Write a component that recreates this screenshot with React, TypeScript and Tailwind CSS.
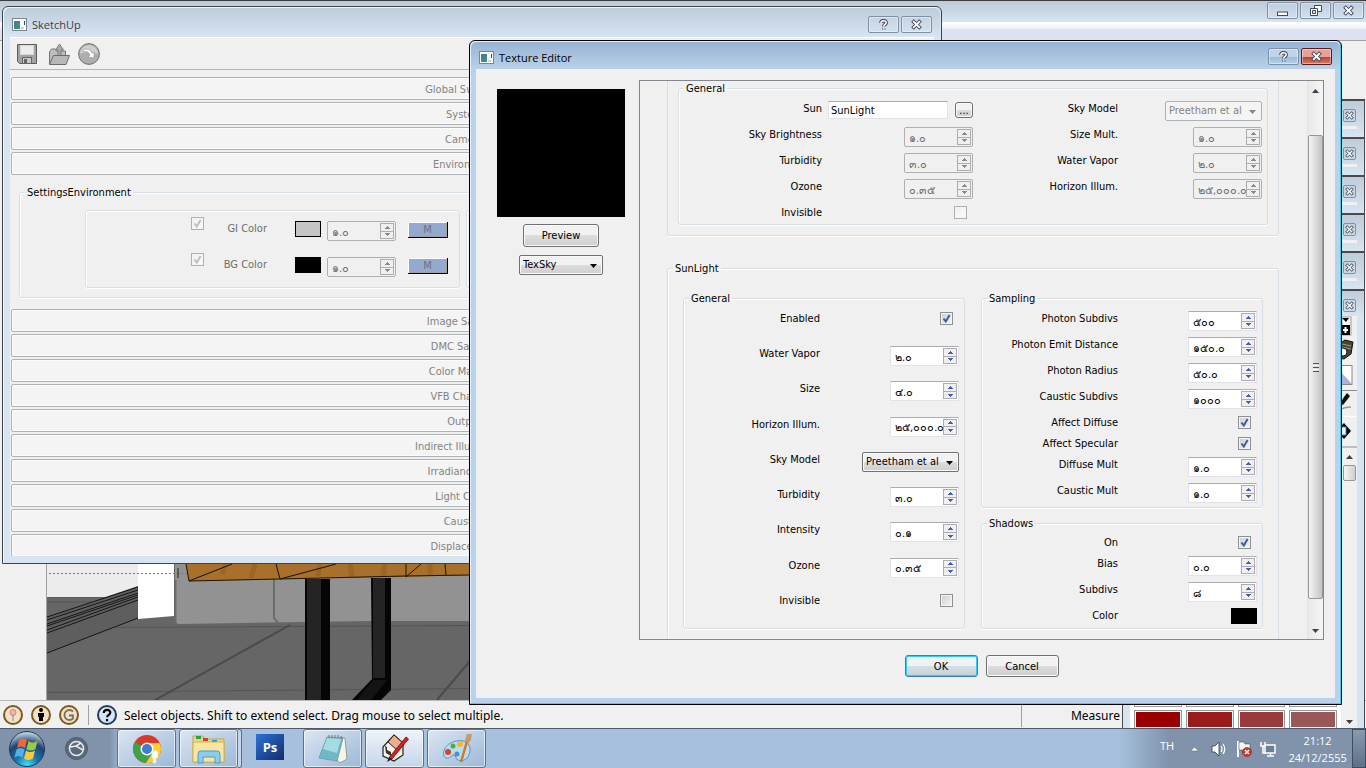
import { useId } from "react";
import type { ReactNode } from "react";

/* ---------- small controls ---------- */

const Spin = ({ id, value, disabled }: { id: string; value: string; disabled?: boolean }) => (
  <div
    className={`flex h-5 w-[69px] shrink-0 items-center border p-px ${
      disabled
        ? "rounded-xs border-[#afafaf] bg-[#f0f0f0]"
        : "border-[#e2e3ea] border-t-[#abadb3] bg-white"
    }`}
  >
    <input
      id={id}
      type="text"
      defaultValue={value}
      disabled={disabled}
      className={`w-0 min-w-0 flex-1 bg-transparent pt-[3px] pl-[3px] text-[11px] leading-3 ${
        disabled ? "text-[#6d6d6d]" : "text-black"
      }`}
    />
    <div className="flex h-4 w-[14px] flex-col border border-[#abadb3] bg-[#f0f0f0]">
      <button type="button" aria-label="Increase" disabled={disabled} className="flex flex-1 items-center justify-center border-b border-[#abadb3]">
        <svg width="5" height="3" viewBox="0 0 5 3" shapeRendering="crispEdges">
          <path d="M2 0h1v1h1v1h1v1H0V2h1V1h1z" fill={disabled ? "#8a8a8a" : "#4a5fa8"} />
        </svg>
      </button>
      <button type="button" aria-label="Decrease" disabled={disabled} className="flex flex-1 items-center justify-center">
        <svg width="5" height="3" viewBox="0 0 5 3" shapeRendering="crispEdges">
          <path d="M0 0h5v1H4v1H3v1H2V2H1V1H0z" fill={disabled ? "#8a8a8a" : "#4a5fa8"} />
        </svg>
      </button>
    </div>
  </div>
);

const Check = ({ id, checked, disabled }: { id: string; checked?: boolean; disabled?: boolean }) => (
  <span className="relative flex size-[13px] shrink-0">
    <input
      id={id}
      type="checkbox"
      defaultChecked={checked}
      disabled={disabled}
      className={`peer size-[13px] appearance-none border bg-linear-to-br shadow-[inset_0_0_0_1px_#f4f4f4] ${
        disabled ? "border-[#b1b1b1] from-[#f0f0f0] to-[#fbfbfb]" : "border-[#8e8f8f] from-[#c9cdd3] to-[#f6f6f6]"
      }`}
    />
    <svg
      viewBox="0 0 13 13"
      className={`pointer-events-none absolute inset-0 hidden size-[13px] peer-checked:block ${
        disabled ? "text-[#bfbfbf]" : "text-[#43599a]"
      }`}
    >
      <path d="M3.5 6.5l2.3 3L9.6 3" fill="none" stroke="currentColor" strokeWidth="2" />
    </svg>
  </span>
);

const Combo = ({
  id,
  label,
  value,
  disabled,
  className,
}: {
  id: string;
  label?: string;
  value: string;
  disabled?: boolean;
  className: string;
}) => (
  <span className={`relative flex h-5 shrink-0 ${className}`}>
    <select
      id={id}
      aria-label={label}
      disabled={disabled}
      className={`size-full appearance-none rounded-xs border pl-[3px] text-[11px] leading-4 ${
        disabled
          ? "border-[#adb2b5] bg-[#f4f4f4] text-[#838383] opacity-100"
          : "border-[#707070] bg-linear-to-b from-[#f2f2f2] from-50% via-[#dddddd] via-50% to-[#cfcfcf] text-black shadow-[inset_0_0_0_1px_#fafafa]"
      }`}
    >
      <option>{value}</option>
    </select>
    <svg width="7" height="4" viewBox="0 0 7 4" className="pointer-events-none absolute top-[9px] right-[6px]">
      <path d="M0 0h7L3.500 4z" fill={disabled ? "#838383" : "#000"} />
    </svg>
  </span>
);

const PushButton = ({ children, primary, className }: { children: ReactNode; primary?: boolean; className: string }) => (
  <button
    type="button"
    className={`flex items-center justify-center rounded-[3px] border pt-px text-[11px] leading-4 ${
      primary
        ? "border-[#3c7fb1] bg-linear-to-b from-[#eef3f5] from-50% via-[#d3dfe4] via-50% to-[#c4d3da] shadow-[inset_0_0_0_1px_#34c9f7]"
        : "border-[#707070] bg-linear-to-b from-[#f2f2f2] from-50% via-[#dddddd] via-50% to-[#cfcfcf] shadow-[inset_0_0_0_1px_#fafafa]"
    } ${className}`}
  >
    {children}
  </button>
);

/* ---------- form rows ---------- */

type Field = {
  label: string;
  kind: "spin" | "check" | "combo" | "color" | "sun";
  value?: string;
  checked?: boolean;
  disabled?: boolean;
};

const Row = ({ field, labelWidth, className }: { field: Field; labelWidth: string; className: string }) => {
  const id = useId();
  const { kind, label, value = "", checked, disabled } = field;
  return (
    <div className={`flex items-start ${className}`}>
      <label htmlFor={id} className={`shrink-0 pt-px text-right leading-[14px] ${labelWidth}`}>
        {label}
      </label>
      <div className={`flex flex-1 justify-end ${kind === "check" ? "pt-px pr-[6px]" : ""}`}>
        {kind === "spin" && <Spin id={id} value={value} disabled={disabled} />}
        {kind === "check" && <Check id={id} checked={checked} disabled={disabled} />}
        {kind === "combo" && <Combo id={id} value={value} disabled={disabled} className="w-[97px]" />}
        {kind === "color" && <input id={id} type="button" aria-label="Color" className="h-4 w-[26px] bg-black" />}
        {kind === "sun" && (
          <div className="flex flex-1 items-center gap-[7px] pl-[6px]">
            <input
              id={id}
              type="text"
              defaultValue={value}
              className="h-[18px] w-0 flex-1 border border-[#e2e3ea] border-t-[#abadb3] bg-white pl-[2px] text-[11px]"
            />
            <PushButton className="h-4 w-[18px]">...</PushButton>
          </div>
        )}
      </div>
    </div>
  );
};

const Group = ({ title, className, children }: { title?: string; className: string; children: ReactNode }) => (
  <fieldset className={`min-w-0 rounded-[3px] border border-[#d5dfe5] shadow-[inset_1px_1px_0_#fff,0_1px_0_#fff] ${className}`}>
    {title && <legend className="ml-[5px] px-[2px] pt-[2px] leading-[14px] text-black">{title}</legend>}
    {children}
  </fieldset>
);

const skyLeft: Field[] = [
  { label: "Sun", kind: "sun", value: "SunLight" },
  { label: "Sky Brightness", kind: "spin", value: "๑.๐", disabled: true },
  { label: "Turbidity", kind: "spin", value: "๓.๐", disabled: true },
  { label: "Ozone", kind: "spin", value: "๐.๓๕", disabled: true },
  { label: "Invisible", kind: "check", disabled: true },
];

const skyRight: Field[] = [
  { label: "Sky Model", kind: "combo", value: "Preetham et al", disabled: true },
  { label: "Size Mult.", kind: "spin", value: "๑.๐", disabled: true },
  { label: "Water Vapor", kind: "spin", value: "๒.๐", disabled: true },
  { label: "Horizon Illum.", kind: "spin", value: "๒๕,๐๐๐.๐", disabled: true },
];

const sunGeneral: Field[] = [
  { label: "Enabled", kind: "check", checked: true },
  { label: "Water Vapor", kind: "spin", value: "๒.๐" },
  { label: "Size", kind: "spin", value: "๔.๐" },
  { label: "Horizon Illum.", kind: "spin", value: "๒๕,๐๐๐.๐" },
  { label: "Sky Model", kind: "combo", value: "Preetham et al" },
  { label: "Turbidity", kind: "spin", value: "๓.๐" },
  { label: "Intensity", kind: "spin", value: "๐.๑" },
  { label: "Ozone", kind: "spin", value: "๐.๓๕" },
  { label: "Invisible", kind: "check" },
];

const sampling: Field[] = [
  { label: "Photon Subdivs", kind: "spin", value: "๕๐๐" },
  { label: "Photon Emit Distance", kind: "spin", value: "๑๕๐.๐" },
  { label: "Photon Radius", kind: "spin", value: "๕๐.๐" },
  { label: "Caustic Subdivs", kind: "spin", value: "๑๐๐๐" },
  { label: "Affect Diffuse", kind: "check", checked: true },
  { label: "Affect Specular", kind: "check", checked: true },
  { label: "Diffuse Mult", kind: "spin", value: "๑.๐" },
  { label: "Caustic Mult", kind: "spin", value: "๑.๐" },
];

const shadows: Field[] = [
  { label: "On", kind: "check", checked: true },
  { label: "Bias", kind: "spin", value: "๐.๐" },
  { label: "Subdivs", kind: "spin", value: "๘" },
  { label: "Color", kind: "color" },
];

const rowHeight = (f: Field) => (f.kind === "check" ? "h-[21px]" : "h-[26px]");

/* ---------- window chrome ---------- */

const AppIcon = () => (
  <svg width="15" height="13" viewBox="0 0 15 13" className="shrink-0">
    <rect x=".5" y=".5" width="14" height="12" fill="#fff" stroke="#7f858c" />
    <rect x="2" y="3" width="6" height="8" fill="#3f8f7d" />
    <path d="M2 3h6L2 9z" fill="#4a78a8" />
    <rect x="9" y="9" width="3" height="2" fill="#cdd2d6" />
    <rect x="12" y="3" width="1" height="4" fill="#2b4a8a" />
  </svg>
);

const Cross = ({ size = 11 }: { size?: number }) => (
  <svg width={size} height={size} viewBox="0 0 12 11">
    <path d="M3 2.500l6 6M9 2.500l-6 6" stroke="#434a5c" strokeWidth="4" strokeLinecap="square" />
    <path d="M3 2.500l6 6M9 2.500l-6 6" stroke="#fff" strokeWidth="2" strokeLinecap="square" />
  </svg>
);

const CaptionButton = ({ label, red, className, children }: { label: string; red?: boolean; className?: string; children: ReactNode }) => (
  <button
    type="button"
    aria-label={label}
    className={`flex h-[17px] w-[31px] items-center justify-center rounded-xs border shadow-[inset_0_0_0_1px_rgba(255,255,255,0.4)] ${
      red
        ? "border-[#5a1a1d] bg-linear-to-b from-[#e5a398] from-50% via-[#bb3d24] via-50% to-[#d27b66]"
        : "border-[#7f90a9]"
    } ${className ?? ""}`}
  >
    {children}
  </button>
);

const Question = () => (
  <svg width="11" height="12" viewBox="0 0 11 12" fill="none">
    <path d="M3 4c0-3 5.200-3 5.200-.3C8.200 5.500 5.700 5.500 5.700 7.500M5.700 9.500v1" stroke="#434a5c" strokeWidth="3.600" />
    <path d="M3 4c0-3 5.200-3 5.200-.3C8.200 5.500 5.700 5.500 5.700 7.500M5.700 9.500v1" stroke="#fff" strokeWidth="1.600" />
  </svg>
);

const SmallArrow = ({ down }: { down?: boolean }) => (
  <svg width="7" height="4" viewBox="0 0 7 4">
    <path d={down ? "M0 0h7L3.500 4z" : "M0 4h7L3.500 0z"} fill="#404040" />
  </svg>
);

/* ---------- Texture Editor ---------- */

const TextureEditor = () => (
  <section className="absolute top-10 left-[469px] flex h-[665px] w-[873px] flex-col rounded-t-md border border-black bg-[#b9d1ea] px-[6px] pb-[6px] shadow-[inset_-1px_-1px_0_#3fd0ee,inset_1px_1px_0_#e6f0fa]">
    <header className="-mx-[5px] mt-px flex h-[27px] shrink-0 items-center gap-[5px] rounded-t-md bg-linear-to-b from-[#98b4d2] to-[#b9d1ea] px-2 pb-[2px] pt-[6px]">
      <AppIcon />
      <h1 className="flex-1 font-['Open_Sans',sans-serif] text-[11px] leading-4 text-black">Texture Editor</h1>
      <div className="flex gap-[2px] pb-[2px]">
        <CaptionButton label="Help" className="border-[#5c7291] bg-linear-to-b from-[#c0d3e8] from-50% via-[#9db8d5] via-50% to-[#b9d1ea]">
          <Question />
        </CaptionButton>
        <CaptionButton label="Close" red>
          <Cross />
        </CaptionButton>
      </div>
    </header>

    <div className="flex min-h-0 flex-1 flex-col bg-[#f0f0f0] px-[11px] pt-[11px]">
      <div className="flex h-[560px] gap-[14px] pl-[10px]">
        <div className="flex w-32 shrink-0 flex-col items-center pt-[9px]">
          <div className="size-32 bg-black" />
          <PushButton className="mt-[7px] h-[23px] w-[76px]">Preview</PushButton>
          <Combo id="texture-type" label="Texture type" value="TexSky" className="mt-2 w-[84px]" />
        </div>

        <div className="flex min-w-0 flex-1 overflow-hidden border border-[#828790]">
          <div className="min-w-0 flex-1 pr-7 pl-[27px]">
            <fieldset className="rounded-b-[3px] border border-t-0 border-[#d5dfe5] px-[10px] pb-[10px] shadow-[0_1px_0_#fff]">
              <Group title="General" className="-mt-px h-[145px]">
                <div className="flex h-[124px] items-start gap-2 pt-[5px] pr-[5px] pl-px">
                  <div className="w-[293px]">
                    {skyLeft.map((f) => (
                      <Row key={f.label} field={f} labelWidth="w-[142px]" className="h-[26px]" />
                    ))}
                  </div>
                  <div className="flex-1">
                    {skyRight.map((f) => (
                      <Row key={f.label} field={f} labelWidth="w-[137px]" className="h-[26px]" />
                    ))}
                  </div>
                </div>
              </Group>
            </fieldset>

            <Group title="SunLight" className="mt-6 h-[400px]">
              <div className="flex gap-4 px-[15px] pt-[14px]">
                <Group title="General" className="w-[282px]">
                  <div className="flex h-[322px] flex-col pt-[5px] pr-[5px] pl-[6px]">
                    {sunGeneral.map((f) => (
                      <Row key={f.label} field={f} labelWidth="w-[130px]" className="min-h-0 flex-1" />
                    ))}
                  </div>
                </Group>
                <div className="flex min-w-0 flex-1 flex-col gap-[7px]">
                  <Group title="Sampling" className="">
                    <div className="h-[201px] px-[5px] pt-[5px]">
                      {sampling.map((f) => (
                        <Row key={f.label} field={f} labelWidth="w-[131px]" className={rowHeight(f)} />
                      ))}
                    </div>
                  </Group>
                  <Group title="Shadows" className="">
                    <div className="h-[97px] px-[5px] pt-1">
                      {shadows.map((f) => (
                        <Row key={f.label} field={f} labelWidth="w-[131px]" className={rowHeight(f)} />
                      ))}
                    </div>
                  </Group>
                </div>
              </div>
            </Group>
          </div>

          <div className="flex w-4 shrink-0 flex-col items-center border-l border-[#e3e3e3] bg-linear-to-r from-[#e9e9e9] to-[#f5f5f5]">
            <div className="flex h-[54px] items-start pt-2">
              <SmallArrow />
            </div>
            <div className="flex w-[15px] flex-1 flex-col items-center justify-center gap-px rounded-xs border border-[#979797] bg-linear-to-r from-[#f5f5f5] to-[#c4c4c8]">
              <i className="h-px w-[6px] bg-[#555]" />
              <i className="h-px w-[6px] bg-white" />
              <i className="h-px w-[6px] bg-[#555]" />
              <i className="h-px w-[6px] bg-white" />
              <i className="h-px w-[6px] bg-[#555]" />
            </div>
            <div className="flex h-10 items-end pb-[6px]">
              <SmallArrow down />
            </div>
          </div>
        </div>
      </div>

      <div className="flex justify-center gap-2 pt-[15px] pl-[169px] pr-[17px]">
        <PushButton primary className="h-[22px] w-[73px]">
          OK
        </PushButton>
        <PushButton className="h-[22px] w-[73px]">Cancel</PushButton>
      </div>
    </div>
  </section>
);

/* ---------- SketchUp options window ---------- */

const Rollout = ({ children }: { children: string }) => (
  <button
    type="button"
    className="flex h-[23px] w-full shrink-0 items-center justify-center rounded-xs border border-[#adb2b5] bg-[#f4f4f4] pt-[2px] leading-4 text-[#838383] shadow-[inset_0_0_0_1px_#fcfcfc]"
  >
    {children}
  </button>
);

const EnvRow = ({ label, color }: { label: string; color: string }) => {
  const id = useId();
  return (
    <div className="flex h-9 items-start">
      <div className="-mt-1">
        <Check id={id} checked disabled />
      </div>
      <label htmlFor={id} className="w-[63px] pt-px text-right leading-[14px] text-[#6d6d6d]">
        {label}
      </label>
      <button type="button" aria-label={`${label} swatch`} className={`ml-7 h-4 w-[26px] border border-black ${color}`} />
      <span className="ml-[6px]">
        <Spin id={`${id}-value`} value="๑.๐" disabled />
      </span>
      <button
        type="button"
        className="mt-px ml-3 flex h-4 w-10 items-center justify-center border-r border-b border-black bg-[#93a9cf] pt-[2px] text-[11px] text-[#6d7080] shadow-[inset_1px_1px_0_#fff,inset_-1px_-1px_0_#a0a0a0]"
      >
        M
      </button>
    </div>
  );
};

const topRollouts = ["Global Switches", "System", "Camera", "Environment"];
const bottomRollouts = [
  "Image Sampler",
  "DMC Sampler",
  "Color Mapping",
  "VFB Channels",
  "Output",
  "Indirect Illumination",
  "Irradiance Map",
  "Light Cache",
  "Caustics",
  "Displacement",
];

const OptionsWindow = () => (
  <section className="absolute top-[6px] left-[2px] flex h-[558px] w-[940px] flex-col rounded-t-md border border-[#3e4347] bg-[#d7e4f2] px-[7px] pb-[7px] shadow-[inset_1px_1px_0_#f0f5fa]">
    <header className="-mx-[6px] mt-px flex h-[29px] shrink-0 items-center gap-[5px] rounded-t-md bg-linear-to-b from-[#bfcddb] to-[#d7e4f2] px-2 pt-1">
      <AppIcon />
      <h2 className="flex-1 font-['Open_Sans',sans-serif] text-[11px] leading-4 text-[#3c4146]">SketchUp</h2>
      <div className="flex gap-[2px]">
        <CaptionButton label="Help">
          <Question />
        </CaptionButton>
        <CaptionButton label="Close">
          <Cross />
        </CaptionButton>
      </div>
    </header>

    <div className="flex min-h-0 flex-1 flex-col border-t border-white bg-[#f0f0f0]">
      <div className="flex h-8 shrink-0 items-center gap-3 border-b border-[#b5b5b5] px-[7px]">
        <button type="button" aria-label="Save">
          <svg width="20" height="20" viewBox="0 0 20 20">
            <path d="M.5.500h19v19h-17l-2-2z" fill="#a3a3a3" stroke="#5b5b5b" />
            <rect x="3.500" y="1.500" width="13" height="9" fill="#ececec" stroke="#d8d8d8" />
            <rect x="5.500" y="13.500" width="9" height="6" fill="#c8c8c8" stroke="#666" />
            <rect x="7" y="15" width="3" height="4" fill="#666" />
          </svg>
        </button>
        <button type="button" aria-label="Load">
          <svg width="21" height="22" viewBox="0 0 21 22">
            <path d="M.5 21V9l2-3h4l1 2h9v5" fill="#bdbdbd" stroke="#777" />
            <path d="M10.500 1l4 6h-2.500v6H9V7H6.500z" fill="#a9a9a9" stroke="#7d7d7d" />
            <path d="M.5 21.500l4-9h16l-3.500 9z" fill="#b8b8b8" stroke="#6b6b6b" />
          </svg>
        </button>
        <button type="button" aria-label="Restore defaults" className="-ml-1">
          <svg width="22" height="22" viewBox="0 0 22 22">
            <circle cx="11" cy="11" r="10.400" fill="#aeaeae" stroke="#717171" />
            <path d="M2 11a9 9 0 0 1 18 0q-9-4-18 0z" fill="#cfcfcf" />
            <path d="M5 7c4-2 7-1 9 3l2-1v6l-6-1 2-2C10 8 8 8 5 9z" fill="#fff" stroke="#929292" strokeWidth=".6" />
          </svg>
        </button>
      </div>

      <div className="flex min-h-0 flex-1 flex-col gap-[2px] overflow-hidden pt-[7px] pr-4 pl-px">
        {topRollouts.map((name) => (
          <Rollout key={name}>{name}</Rollout>
        ))}
        <Group title="SettingsEnvironment" className="mt-[7px] mb-[9px] ml-2 h-[114px] shrink-0">
          <div className="flex gap-[6px] px-[65px] pt-[10px]">
            <Group className="h-[78px] w-[375px] shrink-0 pt-[10px] pl-[105px]">
              <EnvRow label="GI Color" color="bg-[#c5c5c5]" />
              <EnvRow label="BG Color" color="bg-black" />
            </Group>
            <Group className="h-[78px] flex-1">{null}</Group>
          </div>
        </Group>
        {bottomRollouts.map((name) => (
          <Rollout key={name}>{name}</Rollout>
        ))}
      </div>
    </div>
  </section>
);

/* ---------- modelling viewport ---------- */

const Viewport = () => (
  <svg width="423" height="136" viewBox="47 564 423 136" className="shrink-0">
    <rect x="47" y="564" width="423" height="136" fill="#666" />
    <path d="M47 564h91v23l-30 10H47z" fill="#ececec" />
    <path d="M175 564h295v57l-100 0-192 3-3-3z" fill="#929292" />
    <path d="M138 564h36v52l-36 3z" fill="#fff" />
    <path d="M47 597.500h61" stroke="#4a48e8" />
    <path d="M47 602h48" stroke="#555" />
    <path d="M47 617l91-31v32l-91 35z" fill="#5e5e5e" />
    <path d="M47 617l91-30M47 620l91-30M47 624l91-31M47 626l91-31M47 630l91-33M47 633l91-33M47 653l91-35" stroke="#161616" fill="none" />
    <path d="M274 578v40l5 6M175.500 580v42" stroke="#6c6c6c" strokeWidth="2" fill="none" />
    <path d="M49 573.500h138" stroke="#777" strokeDasharray="2 2" />
    <path d="M178 568v10" stroke="#222" />
    <path d="M186 564h284v11l-65 2-125 2-91 2z" fill="#a8702b" />
    <path d="M225 564l-2 10M255 564l-4 14M320 564l-2 12M350 564l2 13M385 564l-2 12M430 564v11" stroke="#93601f" strokeWidth="5" opacity=".6" />
    <path d="M186 564l3 17 91-2 125-3 65-1M189 581l43-17M276 564l4 15M280 579l56-15M406 564v13l15-13M445 564l1 11" stroke="#1c1204" fill="none" />
    <path d="M115 627.500l355-2M47 692.500l423-4" stroke="#555" />
    <path d="M290 625L155 700M470 661l-33 39" stroke="#4a4a4a" strokeWidth="2" />
    <path d="M305 579h25v121h-25z" fill="#050505" />
    <path d="M307 579h14v121h-14z" fill="#242424" />
    <path d="M371 578h20v112l-10 10h-29l20-21z" fill="#050505" />
    <path d="M373 578h12v100h-12z" fill="#242424" />
    <path d="M373 680h14l-16 20h-14z" fill="#141414" />
  </svg>
);

/* ---------- tray on the right edge ---------- */

const trays = ["Tray 1", "Tray 2", "Tray 3", "Tray 4", "Tray 5"];

const TrayClose = ({ name }: { name: string }) => (
  <div className="flex justify-end pt-2 pr-2">
    <button type="button" aria-label={`Close ${name}`} className="flex size-[13px] items-center justify-center rounded-xs border border-[#7f90a9]">
      <Cross size={9} />
    </button>
  </div>
);

const SideTrays = () => (
  <aside className="absolute top-[99px] right-px bottom-10 flex w-[243px] flex-col">
    {trays.map((name) => (
      <div key={name} className="h-[38px] shrink-0 border-t-2 border-r border-[#4a4a4a] bg-linear-to-b from-[#bfcddb] to-[#d7e4f2]">
        <TrayClose name={name} />
        <div className="mt-1 mr-[7px] ml-[7px] h-[3px] bg-[#f0f0f0]" />
      </div>
    ))}
    <div className="flex min-h-0 flex-1 flex-col border-t-2 border-r border-l border-[#4a4a4a] bg-[#d7e4f2] px-[7px]">
      <div className="-mx-[7px] h-[25px] shrink-0 bg-linear-to-b from-[#bfcddb] to-[#d7e4f2]">
        <TrayClose name="Materials" />
      </div>
      <div className="flex min-h-0 flex-1 flex-col bg-[#f0f0f0]">
        <div className="flex h-[132px] shrink-0 flex-col items-end">
          <svg width="22" height="132" viewBox="-1 2 22 132">
            <rect x="6" y="3" width="9" height="18" fill="#fff" stroke="#999" />
            <path d="M6 4h7l-3 4z" fill="#000" />
            <rect x="6" y="11" width="8" height="10" fill="#000" />
            <path d="M7 16h5M9.500 13v6" stroke="#fff" strokeWidth="2" />
            <path d="M3 30l6-4 8 2-2 12-7 5-5-1z" fill="#4a4436" stroke="#111" />
            <path d="M6 30l9 2M6 33l9 2" stroke="#a39b80" />
            <circle cx="7" cy="38" r="4" fill="#fff" stroke="#111" />
            <rect x="3" y="51.500" width="13" height="19" fill="#fff" stroke="#888" />
            <path d="M3 56l13 14H3z" fill="#aeb2d6" />
            <path d="M-1 76.500h22M-1 133h22" stroke="#8c8c8c" />
            <path d="M11 79l3 3-3 4-4 5-3-2 4-6z" fill="#111" />
            <path d="M4 96q4-3 11-3" stroke="#999" strokeWidth="1.500" fill="none" />
            <path d="M-1 102.500h22" stroke="#fff" />
            <path d="M8 109l7 8-7 8-5-5v-6z" fill="#000" />
            <rect x="4" y="113" width="6" height="8" fill="#fff" stroke="#2a7fd4" />
          </svg>
        </div>
        <div className="flex min-h-0 flex-1">
          <div className="flex min-w-0 flex-1 flex-col justify-end overflow-hidden bg-white px-1">
            <div className="grid grid-cols-4 gap-x-1 gap-y-[3px]">
              {["bg-[#cc1f1f]", "bg-[#d04747]", "bg-[#d06b6b]", "bg-[#d08b8b]"].map((c) => (
                <button key={c} type="button" aria-label="Material" className={`h-4 border border-[#999] ring-1 ring-white ring-inset ${c}`} />
              ))}
              {["bg-[#990000]", "bg-[#991c1c]", "bg-[#993b3b]", "bg-[#995858]"].map((c) => (
                <button key={c} type="button" aria-label="Material" className={`h-[18px] border border-b-0 border-[#999] shadow-[inset_0_0_0_1px_#fff] ${c}`} />
              ))}
            </div>
          </div>
          <div className="flex w-4 shrink-0 flex-col items-center justify-between bg-[#f0f0f0] pt-[7px] pb-1">
            <div className="flex flex-col items-center gap-[6px]">
              <SmallArrow />
              <div className="h-4 w-[13px] rounded-xs border border-[#979797] bg-linear-to-r from-[#f5f5f5] to-[#cfcfcf]" />
            </div>
            <SmallArrow down />
          </div>
        </div>
      </div>
    </div>
  </aside>
);

/* ---------- status bar and taskbar ---------- */

const StatusBar = () => (
  <footer className="flex h-7 shrink-0 items-center border-t border-[#b8b8b8] bg-[#f0f0f0] pt-px font-['Noto_Sans',sans-serif] text-[12px] text-black">
    <div className="flex items-center gap-2 pl-[3px]">
      <svg width="20" height="20" viewBox="0 0 20 20">
        <circle cx="10" cy="10" r="9" fill="#f0e2c6" stroke="#80571f" strokeWidth="2" />
        <circle cx="10" cy="7.500" r="3" fill="#f3b3a6" stroke="#c88a7e" />
        <path d="M10 10v6" stroke="#888" />
      </svg>
      <svg width="20" height="20" viewBox="0 0 20 20">
        <circle cx="10" cy="10" r="9" fill="#f0e2c6" stroke="#80571f" strokeWidth="2" />
        <circle cx="10" cy="5" r="2" />
        <path d="M7 8h6v4h-1v4H8v-4H7z" />
      </svg>
      <svg width="20" height="20" viewBox="0 0 20 20">
        <circle cx="10" cy="10" r="9" fill="#f0e2c6" stroke="#80571f" strokeWidth="2" />
        <path d="M14 6.500a5 5 0 1 0 0 7v-3h-4" fill="none" stroke="#77705f" strokeWidth="1.800" />
      </svg>
    </div>
    <div className="mr-2 ml-[9px] h-5 w-px bg-[#a0a0a0]" />
    <svg width="20" height="20" viewBox="0 0 20 20">
      <circle cx="10" cy="10" r="9" fill="#d3e6f5" stroke="#1f3d5c" strokeWidth="2" />
      <path d="M6.800 8c0-4 6.500-4 6.500-.5 0 2.300-3.200 2.300-3.200 4.700M10 14v2.200" fill="none" stroke="#000" strokeWidth="2.200" />
    </svg>
    <p className="flex-1 pt-px pl-[7px]">Select objects. Shift to extend select. Drag mouse to select multiple.</p>
    <div className="mr-[244px] flex h-6 w-[101px] items-center justify-end border-l border-[#a0a0a0] pt-px pr-[2px]">Measure</div>
  </footer>
);

const TaskButton = ({ label, active, className, children }: { label: string; active?: boolean; className?: string; children: ReactNode }) => (
  <button
    type="button"
    aria-label={label}
    className={`flex h-[39px] w-[59px] items-center justify-center rounded-[3px] border border-[#5a708c] shadow-[inset_0_0_0_1px_rgba(255,255,255,0.6)] ${
      active ? "bg-linear-to-b from-[#eef3f9] to-[#c5d6ea]" : "bg-linear-to-br from-[#dbe6f2] to-[#9db8d8]"
    } ${className ?? ""}`}
  >
    {children}
  </button>
);

const Taskbar = () => (
  <nav className="flex h-10 shrink-0 items-center border-t border-[#4c5a6c] bg-linear-to-r from-[#8093ab] from-8% via-[#a6c0dd] via-9% to-[#a6c0dd]">
    <button type="button" aria-label="Start" className="ml-2">
      <svg width="38" height="38" viewBox="0 0 38 38">
        <defs>
          <radialGradient id="orb" cx=".5" cy=".95" r=".9">
            <stop offset="0" stopColor="#3ee0ff" />
            <stop offset=".35" stopColor="#1878ae" />
            <stop offset=".7" stopColor="#1d4470" />
            <stop offset="1" stopColor="#b7cad9" />
          </radialGradient>
        </defs>
        <circle cx="19" cy="19" r="17.500" fill="url(#orb)" stroke="#1f3a58" />
        <path d="M11 10q4-3 8 0l-2 8q-4-3-8 0z" fill="#f0673a" />
        <path d="M20.500 11q4 3 9 0l-2 8q-5 3-9 0z" fill="#9bcb45" />
        <path d="M8.500 19.500q4-3 8 0l-2 8q-4-3-8 0z" fill="#5aaee8" />
        <path d="M18 20.500q4 3 9 0l-2 8q-5 3-9 0z" fill="#fbc93b" />
      </svg>
    </button>
    <button type="button" aria-label="Launcher" className="ml-[19px]">
      <svg width="23" height="23" viewBox="0 0 23 23" fill="none">
        <circle cx="11.500" cy="11.500" r="11" fill="#5b697b" stroke="#4e5b6c" />
        <circle cx="11.500" cy="11.500" r="7" stroke="#e6ebf0" strokeWidth="1.500" />
        <path d="M5 10l6-1 7 4M11 9l5-3" stroke="#e6ebf0" strokeWidth="1.500" />
      </svg>
    </button>
    <div className="ml-[29px] flex items-center gap-[3px]">
      <TaskButton label="Chrome">
        <svg width="30" height="30" viewBox="0 0 30 30">
          <circle cx="15" cy="15" r="14" fill="#d8392b" />
          <path d="M15 15L2.900 8A14 14 0 0 0 14 29l7-11z" fill="#3fa14a" />
          <path d="M15 9h12.600A14 14 0 0 1 14 29l7-11z" fill="#f8d12f" />
          <circle cx="15" cy="15" r="6.500" fill="#fff" />
          <circle cx="15" cy="15" r="5" fill="#3f7cc9" />
          <path d="M20 18q4-3 6 0v6h-2v5h-3v-5h-1z" fill="#fff" stroke="#ddd" strokeWidth=".5" />
        </svg>
      </TaskButton>
      <div className="flex">
        <TaskButton label="Explorer" className="w-[55px]">
          <svg width="34" height="30" viewBox="0 0 34 30">
            <path d="M1 2h10l2 3h19v23H1z" fill="#eed57c" stroke="#c4a44a" />
            <path d="M4 2h5v3H4z" fill="#1fa64a" />
            <path d="M11 4h5v3h-5z" fill="#d4402f" />
            <path d="M20 6h5v3h-5z" fill="#2f8fd8" />
            <path d="M1 8h31v20H1z" fill="#f7e6a3" stroke="#cfb057" />
            <path d="M6 29v-9q0-3 3-3h16q3 0 3 3v9h-5v-6H11v6z" fill="#8ccdee" stroke="#4a9cc8" />
          </svg>
        </TaskButton>
        <div className="h-[39px] w-1 rounded-r-[3px] border border-l-0 border-[#5a708c] bg-[#c5d6ea]" />
      </div>
      <button type="button" aria-label="Photoshop" className="mr-[5px] flex w-[50px] justify-center pb-1">
        <svg width="28" height="26" viewBox="0 0 28 26">
          <defs>
            <linearGradient id="ps" x1="0" y1="0" x2="1" y2="1">
              <stop offset="0" stopColor="#2c72d6" />
              <stop offset="1" stopColor="#132d6c" />
            </linearGradient>
          </defs>
          <rect width="28" height="26" fill="url(#ps)" />
          <text x="14" y="18" textAnchor="middle" fill="#fff" className="font-['Open_Sans',sans-serif] text-[13px] font-bold">
            Ps
          </text>
        </svg>
      </button>
      <TaskButton label="Notepad">
        <svg width="32" height="30" viewBox="0 0 32 30">
          <path d="M24 3l4 1 2 21-7 4-3-3z" fill="#f4f4ee" stroke="#9a9a8a" />
          <path d="M10 3l16 1-6 23L2 24z" fill="#6fb9c6" stroke="#6fa3ad" />
          <path d="M10 4l14 1-4 14L6 15z" fill="#a5dbe2" />
          <path d="M12 1v3M15 1v3M18 1v3M21 1v3M24 2v3" stroke="#777" />
        </svg>
      </TaskButton>
      <TaskButton label="SketchUp" active>
        <svg width="30" height="32" viewBox="0 0 30 32">
          <path d="M3 14L14 2l9 8v12l-9 6-11-5z" fill="#f6f2e6" stroke="#222" strokeWidth="1.200" />
          <path d="M14 2l9 8-5 8-10-9z" fill="#eaaf8c" stroke="#222" />
          <path d="M5 13l2 1v3l4 2v4l-5-3z" fill="#333" />
          <path d="M26 4l2.500 2L12 26l-3 1 .5-3z" fill="#d32121" stroke="#6b0d0d" strokeWidth=".8" />
          <path d="M7 29l2-5 3 2z" fill="#222" />
        </svg>
      </TaskButton>
      <TaskButton label="Paint">
        <svg width="32" height="30" viewBox="0 0 32 30">
          <path d="M15 7c9-2 15 3 14 10-1 8-7 11-12 9-3-1-1-4-4-5-3 0-4 4-8 3C0 22 2 10 15 7z" fill="#b8dcf0" stroke="#5c92b8" />
          <circle cx="7" cy="18" r="3" fill="#d9402f" />
          <circle cx="12" cy="12" r="2.500" fill="#52ad3f" />
          <circle cx="19" cy="10" r="3" fill="#f3b82f" />
          <circle cx="16" cy="20" r="2.500" fill="#4a93cf" />
          <path d="M27 4l-7 24" stroke="#c77a2b" strokeWidth="2.500" />
          <path d="M24 6l2-6h5l-1 6-3 4z" fill="#c59b6d" />
        </svg>
      </TaskButton>
    </div>
    <div className="ml-auto flex h-full w-[247px] items-center bg-linear-to-r from-transparent to-[#8093ab] to-20% text-white">
      <span className="ml-[41px] pb-1 font-['Open_Sans',sans-serif] text-[11px]">TH</span>
      <svg width="9" height="6" viewBox="0 0 9 6" className="ml-4">
        <path d="M.5 5l4-4 4 4z" fill="#fff" stroke="#59687a" strokeWidth=".6" />
      </svg>
      <svg width="16" height="16" viewBox="0 0 16 16" className="ml-3">
        <path d="M1 5h3l4-4v14l-4-4H1z" fill="#fff" stroke="#2f3b49" strokeWidth=".8" />
        <path d="M10 5q2 3 0 6M12 3q3.500 5 0 10" stroke="#fff" fill="none" strokeWidth="1.200" />
      </svg>
      <svg width="16" height="18" viewBox="0 0 16 18" className="ml-[9px]">
        <path d="M2 1v16" stroke="#fff" strokeWidth="2" />
        <path d="M3 2h5l1 2h5v8H8l-1-2H3z" fill="#fff" stroke="#3b4756" strokeWidth=".6" />
        <circle cx="11" cy="12" r="4.500" fill="#d8332a" stroke="#8f1f18" strokeWidth=".6" />
        <path d="M9 10l4 4M13 10l-4 4" stroke="#fff" strokeWidth="1.500" />
      </svg>
      <svg width="16" height="16" viewBox="0 0 16 16" className="ml-2">
        <rect x="5" y="4" width="10" height="8" fill="#6c7f96" stroke="#fff" strokeWidth="1.500" />
        <path d="M7 15h7M10.500 12v3M1 1v4h4V1M3 5v7h3" stroke="#fff" strokeWidth="1.500" fill="none" />
      </svg>
      <div className="ml-3 flex-1 text-center font-['Open_Sans',sans-serif] text-[11px] leading-[17px]">
        <div>21:12</div>
        <div>24/12/2555</div>
      </div>
      <button type="button" aria-label="Show desktop" className="ml-[5px] h-full w-[14px] border border-[#3f4d5e] bg-linear-to-b from-[#8a9bb0] to-[#5f7188]" />
    </div>
  </nav>
);

export default function App() {
  return (
    <div className="relative flex h-screen flex-col overflow-hidden bg-[#f0f0f0] font-['DejaVu_Sans_Condensed','Liberation_Sans',sans-serif] text-[11px] text-black">
      <div className="flex h-[22px] shrink-0 items-start justify-end gap-[2px] border-t border-[#3c3c3c] bg-linear-to-b from-[#bccada] to-[#d7e4f2] pt-px pr-[2px]">
        <CaptionButton label="Minimize">
          <svg width="11" height="11" viewBox="0 0 11 11">
            <rect x=".5" y="7" width="10" height="3.500" fill="#fff" stroke="#434a5c" />
          </svg>
        </CaptionButton>
        <CaptionButton label="Restore">
          <svg width="12" height="11" viewBox="0 0 12 11">
            <path d="M4.500.500h7v6h-7z" fill="#fff" stroke="#434a5c" />
            <path d="M.5 3.500h7v7h-7z" fill="#fff" stroke="#434a5c" />
            <path d="M2.500 5.500h3v3h-3z" fill="#d7e4f2" stroke="#434a5c" />
          </svg>
        </CaptionButton>
        <CaptionButton label="Close">
          <Cross />
        </CaptionButton>
      </div>
      <div className="h-[7px] shrink-0 bg-linear-to-b from-white to-[#eef1f8]" />
      <div className="h-3 shrink-0 border-b border-[#a0a0a0] bg-[#dde2f2]" />

      <main className="flex min-h-0 flex-1">
        <div className="w-[47px] shrink-0 border-r border-[#a0a0a0] bg-[#f0f0f0]" />
        <div className="flex min-w-0 flex-1 items-end">
          <Viewport />
        </div>
      </main>

      <StatusBar />
      <Taskbar />
      <SideTrays />
      <OptionsWindow />
      <TextureEditor />
    </div>
  );
}
